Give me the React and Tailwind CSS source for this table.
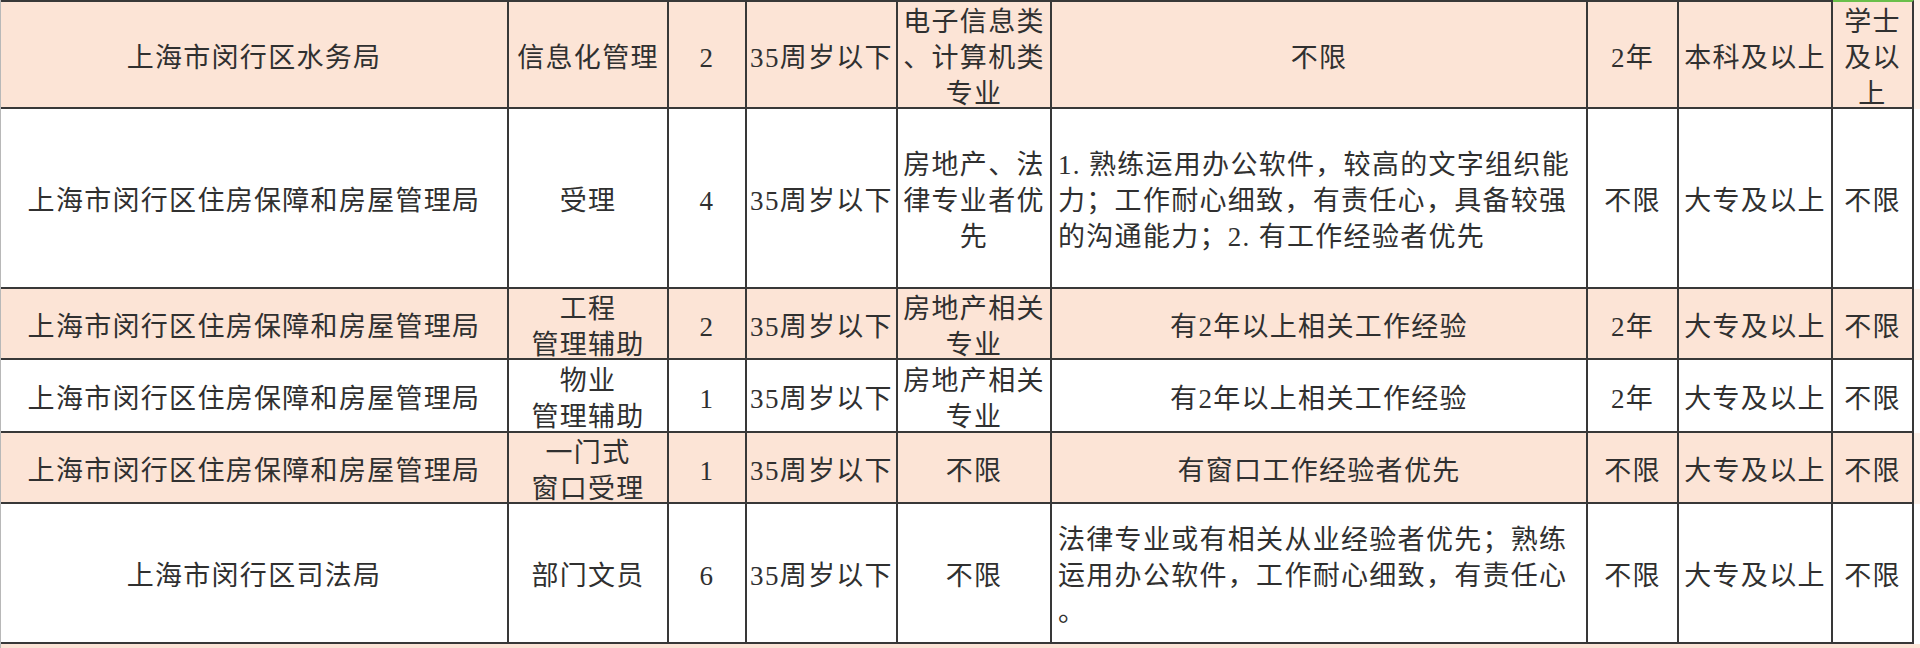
import React from "react";

const PEACH = "bg-[#fce4d6]";
const WHITE = "bg-white";

// each cell: string, array of lines (centered), or { left: [...] }
const rows = [
  {
    bg: PEACH,
    cells: [
      "上海市闵行区水务局",
      "信息化管理",
      "2",
      "35周岁以下",
      ["电子信息类", "、计算机类", "专业"],
      "不限",
      "2年",
      "本科及以上",
      ["学士", "及以", "上"],
    ],
  },
  {
    bg: WHITE,
    cells: [
      "上海市闵行区住房保障和房屋管理局",
      "受理",
      "4",
      "35周岁以下",
      ["房地产、法", "律专业者优", "先"],
      {
        left: [
          "1. 熟练运用办公软件，较高的文字组织能",
          "力；工作耐心细致，有责任心，具备较强",
          "的沟通能力；2. 有工作经验者优先",
        ],
      },
      "不限",
      "大专及以上",
      "不限",
    ],
  },
  {
    bg: PEACH,
    cells: [
      "上海市闵行区住房保障和房屋管理局",
      ["工程", "管理辅助"],
      "2",
      "35周岁以下",
      ["房地产相关", "专业"],
      "有2年以上相关工作经验",
      "2年",
      "大专及以上",
      "不限",
    ],
  },
  {
    bg: WHITE,
    cells: [
      "上海市闵行区住房保障和房屋管理局",
      ["物业", "管理辅助"],
      "1",
      "35周岁以下",
      ["房地产相关", "专业"],
      "有2年以上相关工作经验",
      "2年",
      "大专及以上",
      "不限",
    ],
  },
  {
    bg: PEACH,
    cells: [
      "上海市闵行区住房保障和房屋管理局",
      ["一门式", "窗口受理"],
      "1",
      "35周岁以下",
      "不限",
      "有窗口工作经验者优先",
      "不限",
      "大专及以上",
      "不限",
    ],
  },
  {
    bg: WHITE,
    cells: [
      "上海市闵行区司法局",
      "部门文员",
      "6",
      "35周岁以下",
      "不限",
      {
        left: [
          "法律专业或有相关从业经验者优先；熟练",
          "运用办公软件，工作耐心细致，有责任心",
          "。",
        ],
      },
      "不限",
      "大专及以上",
      "不限",
    ],
  },
];

function Cell({ value, bg, first, last }) {
  const base =
    "border-r-2 border-b-2 border-[#383838] flex items-center overflow-hidden pt-[6px] " +
    bg;
  const top = first
    ? last
      ? " border-t-2 border-t-[#6abf4b]"
      : " border-t-2 border-t-[#383838]"
    : "";

  if (value && value.left) {
    return (
      <div className={base + top + " justify-start text-left pl-[6px]"}>
        <div className="leading-[36px] whitespace-nowrap">
          {value.left.map((l, i) => (
            <div key={i}>{l}</div>
          ))}
        </div>
      </div>
    );
  }

  const lines = Array.isArray(value) ? value : [value];
  return (
    <div className={base + top + " justify-center text-center"}>
      <div className="leading-[36px] whitespace-nowrap">
        {lines.map((l, i) => (
          <div key={i}>{l}</div>
        ))}
      </div>
    </div>
  );
}

export default function App() {
  return (
    <div className="w-[1920px] h-[648px] overflow-hidden bg-[#fce4d6] border-l border-[#b8b8b8] font-['Liberation_Serif','Noto_Sans_CJK_SC',serif] text-[27px] tracking-[1.3px] text-[#303030]">
      <div className="grid grid-cols-[508px_160px_78px_151px_154px_536px_91px_154px_81px_1fr] grid-rows-[109px_180px_71px_73px_71px_140px]">
        {rows.map((row, r) => (
          <React.Fragment key={r}>
            {row.cells.map((c, i) => (
              <Cell
                key={i}
                value={c}
                bg={row.bg}
                first={r === 0}
                last={i === 8}
              />
            ))}
            <div className={row.bg === PEACH ? "bg-[#fdf0e8]" : "bg-white"} />
          </React.Fragment>
        ))}
      </div>
    </div>
  );
}
